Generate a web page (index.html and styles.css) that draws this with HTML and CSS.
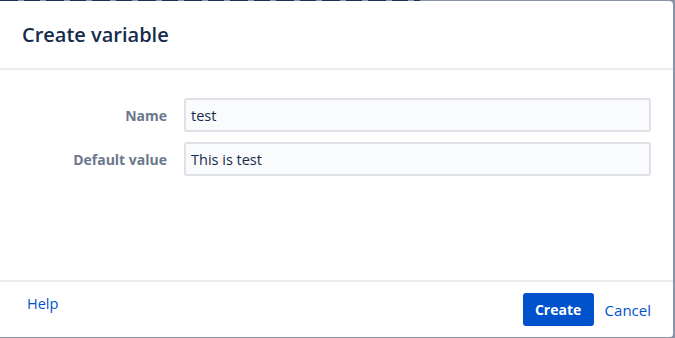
FILE: index.html
```html
<!DOCTYPE html>
<html>
<head>
<meta charset="utf-8">
<link rel="stylesheet" href="styles.css">
</head>
<body>
<div class="backdrop-strip"></div>
<div class="dialog">
  <header class="dialog-header">
    <h2 class="dialog-title">Create variable</h2>
  </header>
  <div class="dialog-body">
    <form class="form">
      <div class="field">
        <label class="field-label">Name</label>
        <div class="field-input">test</div>
      </div>
      <div class="field">
        <label class="field-label">Default value</label>
        <div class="field-input">This is test</div>
      </div>
    </form>
  </div>
  <footer class="dialog-footer">
    <a class="help-link">Help</a>
    <div class="actions">
      <button class="btn-primary">Create</button>
      <a class="cancel-link">Cancel</a>
    </div>
  </footer>
</div>
</body>
</html>
```

FILE: styles.css
```css
html, body {
  margin: 0;
  padding: 0;
}
body {
  width: 675px;
  height: 338px;
  overflow: hidden;
  background: #8a93a3;
  font-family: "Open Sans", "Noto Sans", sans-serif;
  color: #172b4d;
}
.backdrop-strip {
  height: 1px;
  background: repeating-linear-gradient(90deg, #1d2f52 0 18px, #8a93a3 18px 24px, #1d2f52 24px 40px, #8a93a3 40px 46px);
  width: 420px;
}
.dialog {
  width: 673px;
  height: 336px;
  background: #fff;
  border-top-right-radius: 4px;
  border-bottom-right-radius: 3px;
  display: flex;
  flex-direction: column;
}
.dialog-header {
  height: 67px;
  flex: none;
  border-bottom: 2px solid #ebecf0;
  display: flex;
  align-items: center;
  padding-left: 22px;
}
.dialog-title {
  margin: 0;
  font-size: 20px;
  font-weight: 600;
  color: #172b4d;
}
.dialog-body {
  height: 212px;
  flex: none;
  padding-top: 28px;
  box-sizing: border-box;
  border-bottom: 2px solid #ebecf0;
}
.form {
  display: flex;
  flex-direction: column;
  gap: 10px;
}
.field {
  display: flex;
  align-items: center;
}
.field-label {
  width: 167px;
  text-align: right;
  font-size: 14px;
  font-weight: 700;
  color: #6b778c;
}
.field-input {
  margin-left: 17px;
  width: 467px;
  height: 34px;
  box-sizing: border-box;
  border: 2px solid #dfe1e6;
  border-radius: 3px;
  background: #fafbfc;
  font-size: 14.5px;
  padding-left: 5px;
  display: flex;
  align-items: center;
  color: #172b4d;
}
.dialog-footer {
  flex: 1;
  display: flex;
  justify-content: space-between;
  align-items: flex-start;
  padding: 11px 22px 0 27px;
}
.help-link {
  font-size: 14.5px;
  color: #0052cc;
  margin-top: 1px;
}
.actions {
  display: flex;
  align-items: center;
  gap: 11px;
}
.btn-primary {
  width: 71px;
  height: 33px;
  background: #0052cc;
  color: #fff;
  border: none;
  border-radius: 3px;
  font-family: inherit;
  font-size: 14px;
  font-weight: 700;
  padding: 0;
}
.cancel-link {
  font-size: 15px;
  color: #0052cc;
}
```
